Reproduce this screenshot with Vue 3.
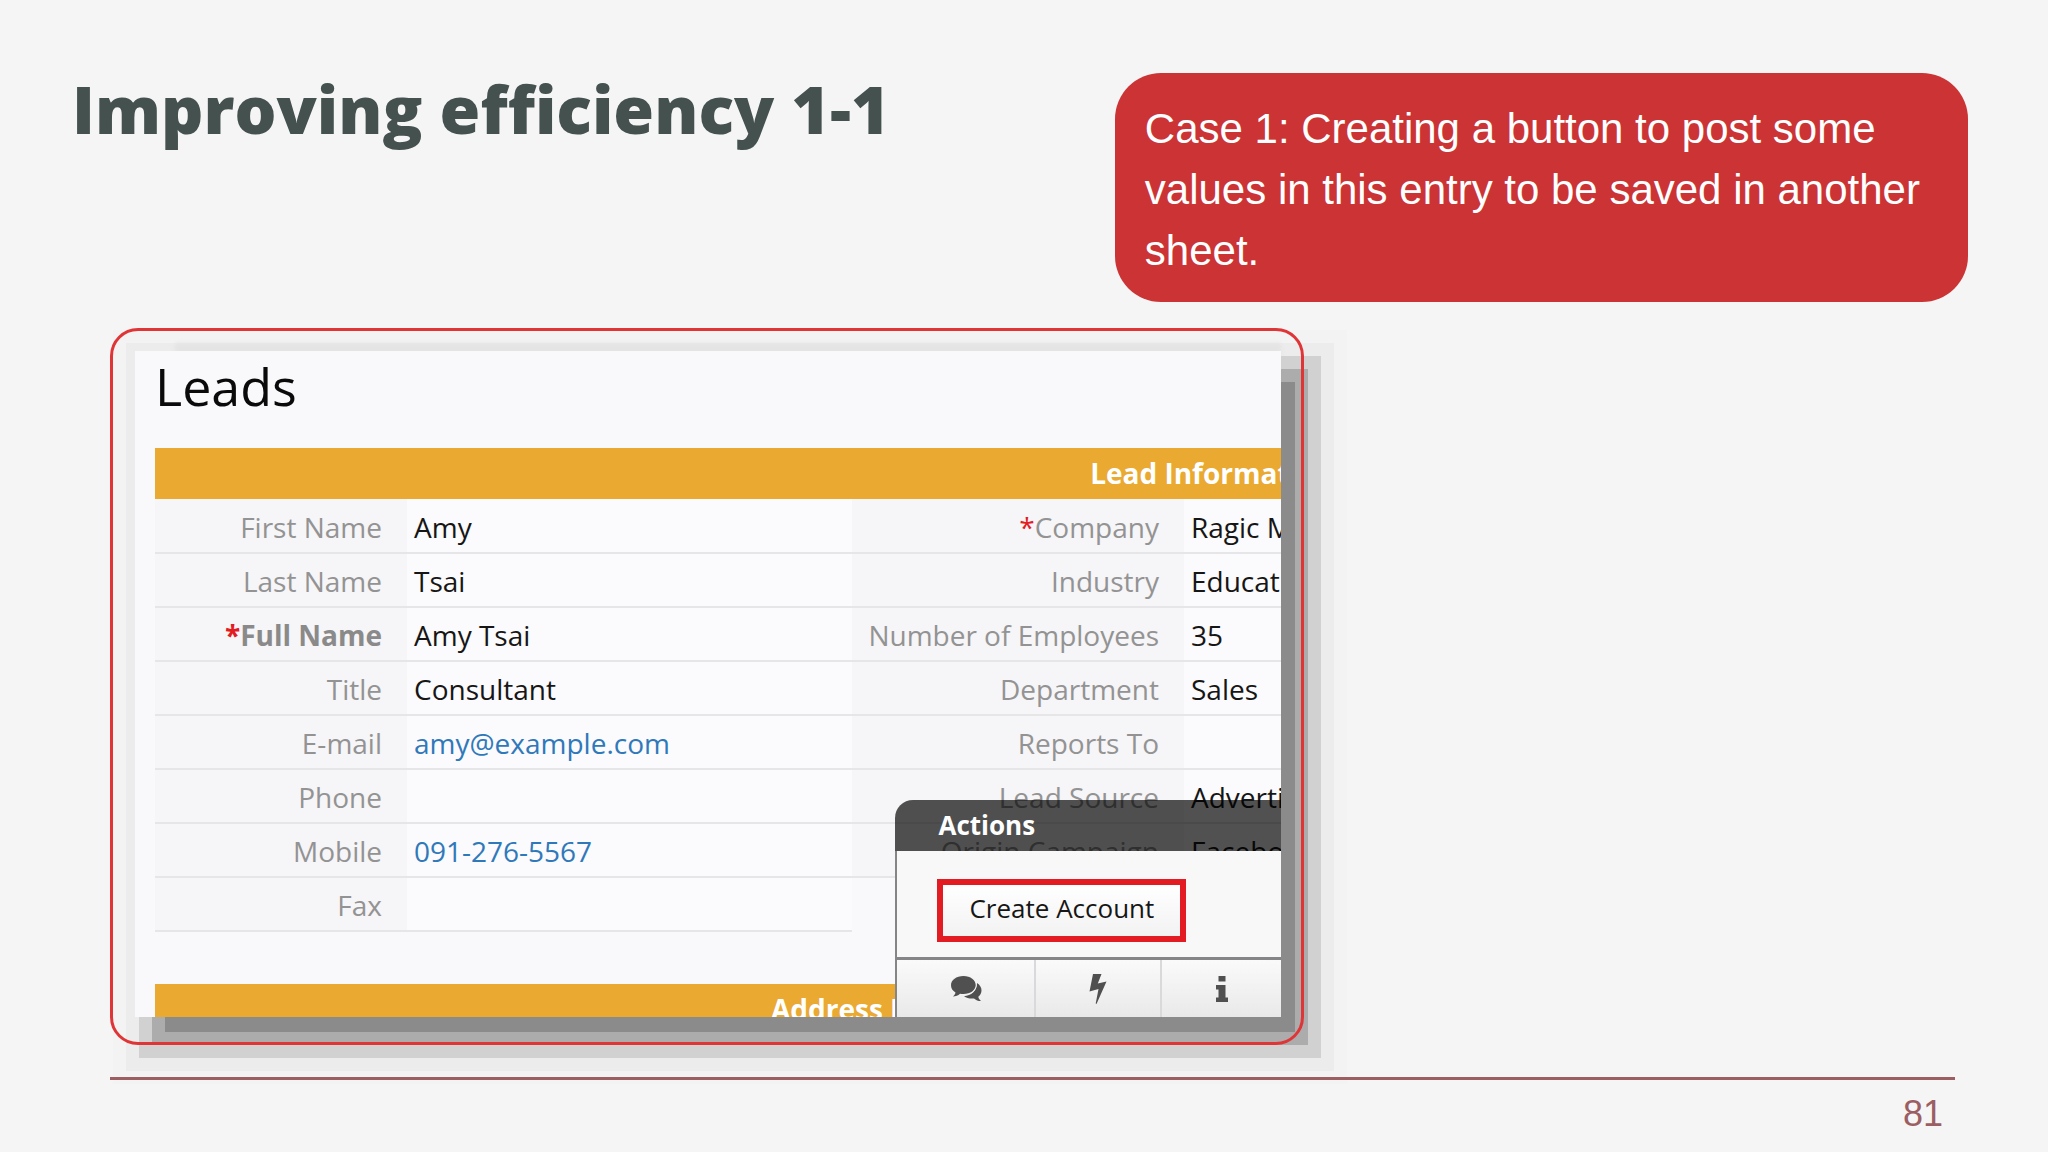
<script setup>

import { ref } from 'vue'

const title = ref('Improving efficiency 1-1')
const page_number = ref(81)

// One entry per line of the lead sheet, left field and right field
const rows = ref([
    { label: 'First Name', value: 'Amy', label2: 'Company', value2: 'Ragic Marketing', required2: true },
    { label: 'Last Name', value: 'Tsai', label2: 'Industry', value2: 'Education' },
    { label: 'Full Name', value: 'Amy Tsai', required: true, bold: true, label2: 'Number of Employees', value2: '35' },
    { label: 'Title', value: 'Consultant', label2: 'Department', value2: 'Sales' },
    { label: 'E-mail', value: 'amy@example.com', href: 'mailto:amy@example.com', label2: 'Reports To', value2: '' },
    { label: 'Phone', value: '', label2: 'Lead Source', value2: 'Advertisement' },
    { label: 'Mobile', value: '091-276-5567', href: 'tel:091-276-5567', label2: 'Origin Campaign', value2: 'Facebook' },
    { label: 'Fax', value: '' },
])

</script>

<template>
    <main class="slide">
        <header class="slide_head">
            <h1 class="slide_title">{{ title }}</h1>
            <p class="callout">Case 1: Creating a button to post some values in this entry to be saved in another sheet.</p>
        </header>

        <section class="frame">
            <div class="sheet">
                <div class="sheet_content">
                    <h2 class="sheet_title">Leads</h2>
                    <table class="fields">
                        <colgroup>
                            <col class="col_label">
                            <col class="col_value">
                            <col class="col_label2">
                            <col class="col_value2">
                        </colgroup>
                        <thead>
                            <tr><th class="section_bar" colspan="4">Lead Information</th></tr>
                        </thead>
                        <tbody>
                            <tr v-for="row in rows" :key="row.label">
                                <th scope="row" class="label" :class="{ bold: row.bold }"><span v-if="row.required" class="star">*</span>{{ row.label }}</th>
                                <td class="value"><a v-if="row.href" :href="row.href">{{ row.value }}</a><template v-else>{{ row.value }}</template></td>
                                <template v-if="row.label2">
                                    <th scope="row" class="label"><span v-if="row.required2" class="star">*</span>{{ row.label2 }}</th>
                                    <td class="value">{{ row.value2 }}</td>
                                </template>
                            </tr>
                        </tbody>
                    </table>
                    <h3 class="section_bar address_bar">Address Information</h3>
                </div>

                <aside class="actions">
                    <h3 class="actions_head">Actions</h3>
                    <div class="actions_body">
                        <button type="button" class="create_button">Create Account</button>
                    </div>
                    <div class="actions_tools">
                        <button type="button" aria-label="Comments">
                            <svg width="32" height="28" viewBox="0 0 32 28">
                                <path d="M27 8c3 2 4.500 4.500 4.500 7.500 0 2.500-1.200 4.600-3.200 6.200.3 1.800 1.200 3 2.700 4.300-2.800 0-5.200-.9-7-2.600-3.700.5-7.300-.3-10-2.200C21 20.700 27 16 27 8z" />
                                <path d="M13.500 1C6.300 1 1 5 1 10.200c0 3 1.700 5.600 4.500 7.300-.3 1.700-1.300 2.900-2.700 4 3 0 5.400-1 7.200-2.700 1.100.2 2.300.3 3.500.3 7 0 12.200-4 12.200-9S20.500 1 13.500 1z" />
                            </svg>
                        </button>
                        <button type="button" aria-label="Automation">
                            <svg width="20" height="32" viewBox="0 0 20 32">
                                <path d="M5 1h8.500l-3.700 9.500L18.500 8.500 8.500 31 7.700 30.500 10.500 16 1.500 18.500z" />
                            </svg>
                        </button>
                        <button type="button" aria-label="Information">
                            <svg width="16" height="28" viewBox="0 0 16 28">
                                <path d="M4.500 1h7v5.500h-7zM2 10h9.500v12.500H14V27H2v-4.500h2.500v-8H2z" />
                            </svg>
                        </button>
                    </div>
                </aside>
            </div>
        </section>

        <footer class="slide_foot">{{ page_number }}</footer>
    </main>
</template>

<style>
body {
    background-color: #F5F5F6;
}
</style>

<style scoped>

.slide {
    box-sizing: border-box;
    min-height: 100vh;
    padding: 73px 80px 0 72px;
    font-family: "Open Sans", "Noto Sans", sans-serif;
}

.slide_head {
    display: flex;
    justify-content: space-between;
    align-items: flex-start;
}

.slide_title {
    margin: 0;
    font-size: 66px;
    line-height: 70px;
    font-weight: 800;
    color: #44514F;
    white-space: nowrap;
}

.callout {
    box-sizing: border-box;
    width: 45%;
    margin: 0;
    padding: 25px 30px 21px;
    border-radius: 46px;
    background-color: #CB3335;
    color: #FFFFFF;
    font-family: "Liberation Sans Narrow", "Arial Narrow", "Liberation Sans", sans-serif;
    font-size: 42px;
    line-height: 61px;
}

/* Red outline, drawn over the shadow of the sheet */

.frame {
    position: relative;
    box-sizing: border-box;
    width: 63%;
    margin: 26px 0 0 38px;
    padding: 23px 23px 28px 25px;
}

.frame:after {
    content: '';
    position: absolute;
    inset: 0;
    border: 3px solid #E03537;
    border-radius: 28px;
    pointer-events: none;
}

.sheet {
    position: relative;
    background-color: #F9F8FA;
    box-shadow:
        22px 23px 0 -8px #8C8B8C,
        22px 23px 0 5px #ADACAD,
        22px 23px 0 18px #D2D1D2,
        20px -28px 4px -20px #E4E4E5,
        22px 23px 0 31px #ECECEC,
        22px 23px 0 44px #F3F3F4;
}

.sheet_content {
    overflow: hidden;
    padding-left: 20px;
}

.sheet_title {
    margin: 0;
    padding-bottom: 27px;
    font-size: 52px;
    line-height: 70px;
    font-weight: 400;
    color: #0A0A0A;
}

.fields {
    width: 2114px;
    table-layout: fixed;
    border-collapse: collapse;
    font-size: 28px;
    line-height: 38px;
}

.col_label {
    width: 252px;
}

.col_value {
    width: 445px;
}

.col_label2 {
    width: 332px;
}

.section_bar {
    height: 51px;
    padding: 0;
    background-color: #EAA931;
    color: #FFFFFF;
    font-size: 28px;
    line-height: 51px;
    font-weight: 700;
}

.label, .value {
    box-sizing: border-box;
    height: 54px;
    padding: 2px 0 0;
    border-bottom: 2px solid #E6E5E7;
}

.label {
    padding-right: 25px;
    background-color: #F6F5F7;
    text-align: right;
    font-weight: 400;
    color: #939393;
}

.label.bold {
    font-weight: 700;
    color: #8A8A8A;
}

.star {
    color: #E31B23;
}

.value {
    padding-left: 7px;
    background-color: #FBFAFC;
    color: #161616;
}

.value a {
    color: #2F79BA;
    text-decoration: none;
}

.address_bar {
    overflow: hidden;
    height: 33px;
    margin: 52px 0 0;
    padding-left: 616px;
}

.actions {
    position: absolute;
    right: 0;
    bottom: 0;
    width: 386px;
}

.actions_head {
    margin: 0;
    padding-left: 43px;
    border-top-left-radius: 18px;
    background-color: rgba(0, 0, 0, 0.68);
    color: #FFFFFF;
    font-size: 26px;
    line-height: 51px;
    font-weight: 700;
}

.actions_body {
    padding: 28px 40px 15px;
    border-left: 2px solid #858486;
    border-bottom: 3px solid #858486;
    background-color: #F8F8F9;
}

.create_button {
    display: block;
    box-sizing: border-box;
    height: 63px;
    padding: 0 26px 6px;
    border: 6px solid #E31B23;
    background: linear-gradient(#FFFFFF, #F2F2F2);
    color: #161616;
    font-family: inherit;
    font-size: 26px;
    line-height: 36px;
    white-space: nowrap;
}

.actions_tools {
    display: grid;
    grid-template-columns: 139px 126px 1fr;
    height: 57px;
    border-left: 2px solid #858486;
}

.actions_tools button {
    display: flex;
    justify-content: center;
    align-items: center;
    padding: 0;
    border: 0;
    border-right: 2px solid #D9D9DB;
    background: linear-gradient(#FAFAFB, #E9E9EA);
}

.actions_tools button:last-child {
    border-right: 0;
}

.actions_tools svg {
    fill: #505050;
}

/* The first bubble is outlined so that it stands off the second */

.actions_tools svg path + path {
    stroke: #F2F2F3;
    stroke-width: 2px;
    paint-order: stroke;
}

.slide_foot {
    position: relative;
    margin: 32px 13px 0 38px;
    padding: 8px 12px 0 0;
    border-top: 3px solid #9B5E62;
    color: #9B5E62;
    font-family: "Liberation Sans Narrow", "Arial Narrow", "Liberation Sans", sans-serif;
    font-size: 36px;
    line-height: 52px;
    text-align: right;
}

</style>
